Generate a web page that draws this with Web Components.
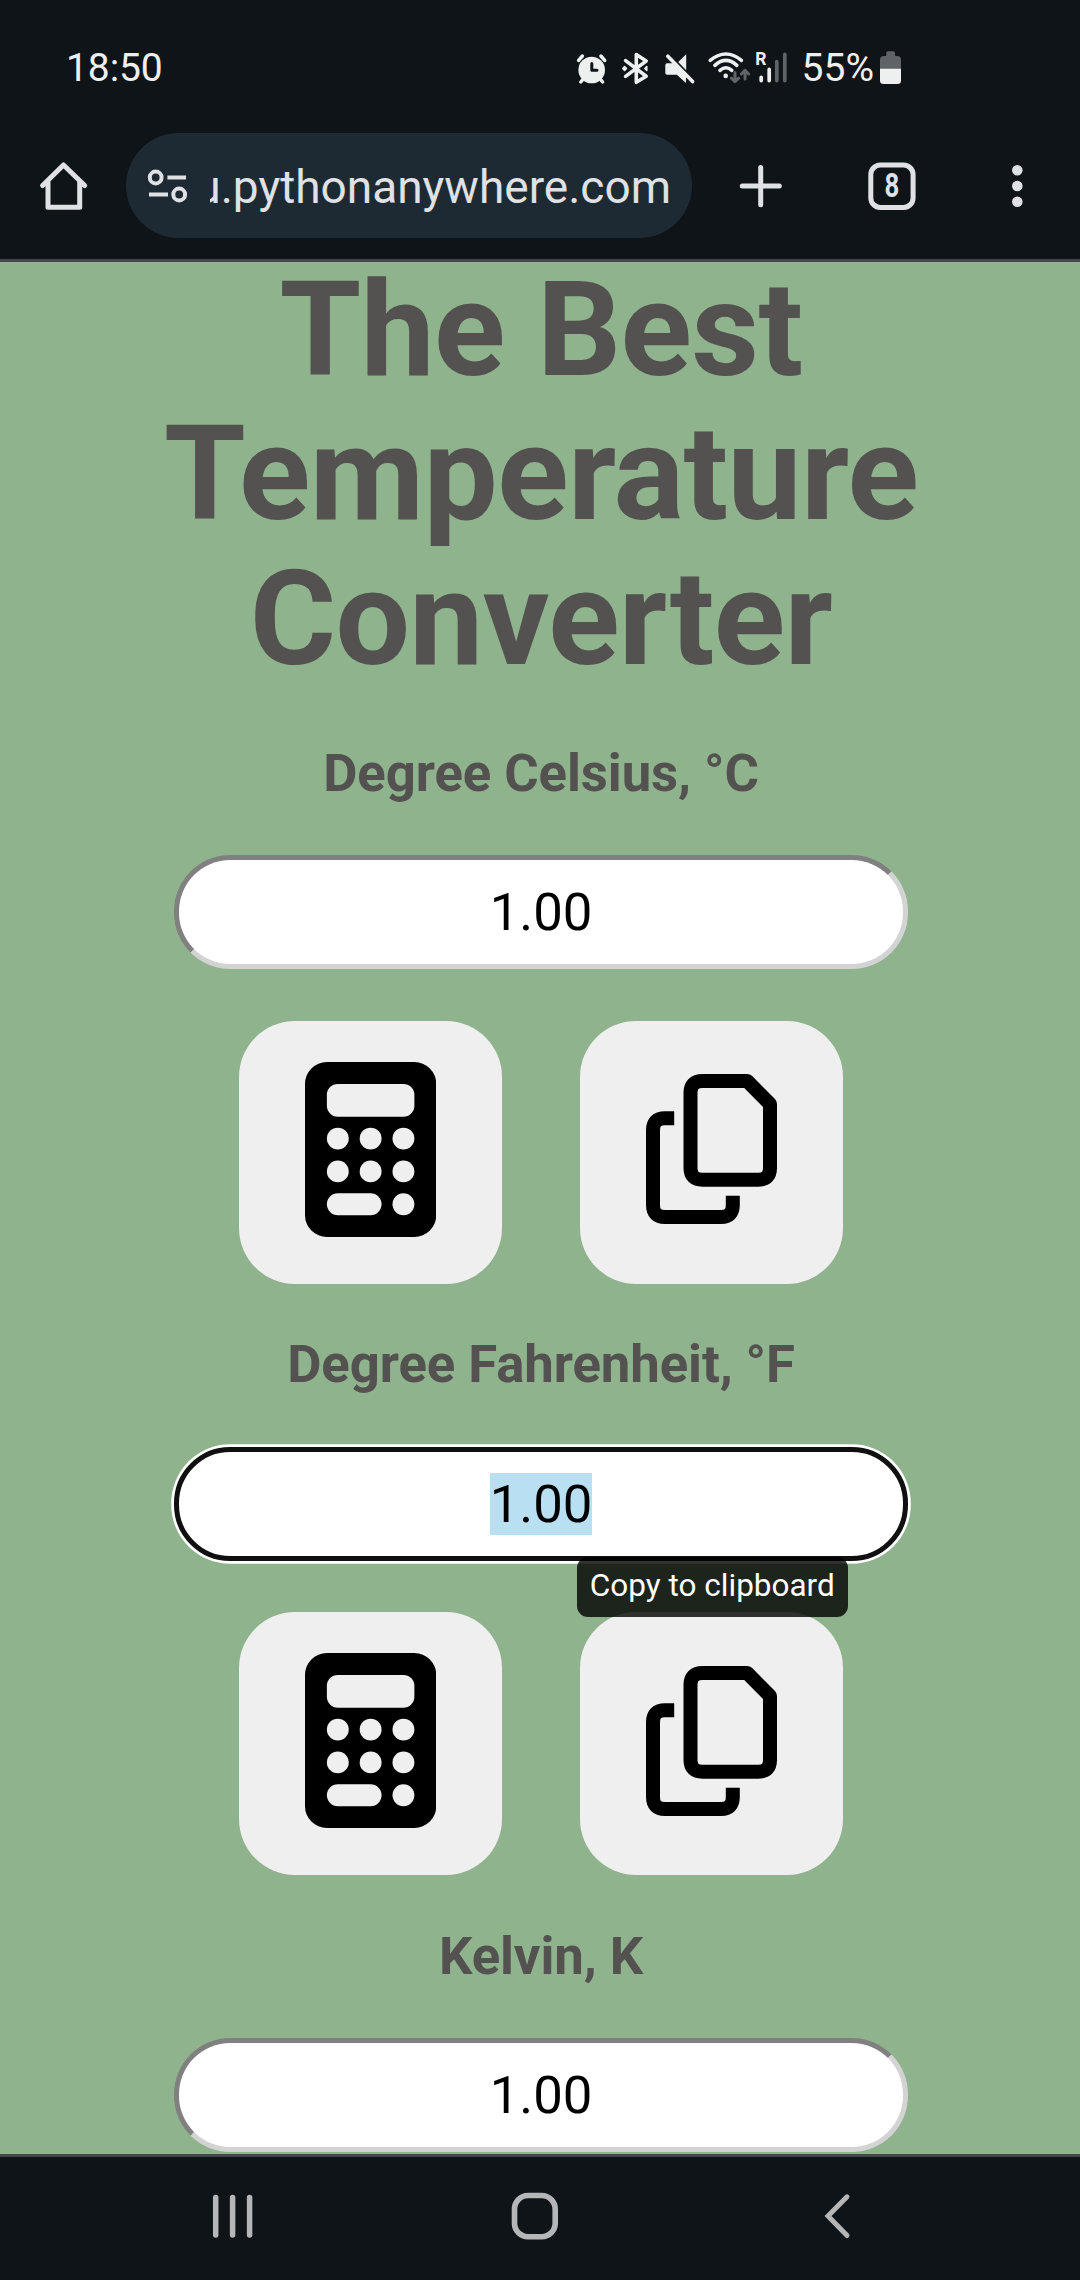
<!DOCTYPE html>
<html lang="en">
<head>
<meta charset="utf-8">
<title>The Best Temperature Converter</title>
<style>
html,body{margin:0;padding:0;background:#0f1418}
body{width:1080px;height:2280px;overflow:hidden;font-family:Roboto,"Liberation Sans",sans-serif}
</style>
</head>
<body>
<phone-screen>
  <status-bar slot="top" time="18:50" battery="55%"></status-bar>
  <browser-bar slot="top" url="u.pythonanywhere.com" tabs="8"></browser-bar>
  <page-title>The Best Temperature Converter</page-title>
  <unit-field label="Degree Celsius, °C" value="1.00"></unit-field>
  <unit-field label="Degree Fahrenheit, °F" value="1.00" focused>
    <tool-tip slot="tip">Copy to clipboard</tool-tip>
  </unit-field>
  <unit-field label="Kelvin, K" value="1.00"></unit-field>
  <nav-bar slot="bottom"></nav-bar>
</phone-screen>
<script>
function define(name, render) {
  customElements.define(name, class extends HTMLElement {
    connectedCallback() {
      if (this.shadowRoot) return;
      const t = document.createElement('template');
      t.innerHTML = render(this);
      this.attachShadow({mode: 'open'}).appendChild(t.content.cloneNode(true));
    }
  });
}

define('phone-screen', () => `
<style>
:host{display:flex;flex-direction:column;width:1080px;height:2280px;background:#0f1418}
header{flex:none}
main{flex:none;height:1892px;overflow:hidden;background:#8fb38c;border-top:3px solid #43484e;border-bottom:3px solid #3f474c}
.scroll{display:flex;flex-direction:column;align-items:center;width:1082px;margin-top:-4.4px}
footer{flex:1}
</style>
<header><slot name="top"></slot></header>
<main><div class="scroll"><slot></slot></div></main>
<footer><slot name="bottom"></slot></footer>`);

define('status-bar', el => `
<style>
:host{display:flex;justify-content:space-between;align-items:center;box-sizing:border-box;height:132px;padding:3px 179px 0 66px;color:#eef0f0}
.time{font-size:39px;line-height:46px;letter-spacing:-.1px}
.right{display:flex;align-items:center}
.pct{font-size:39px;line-height:46px;letter-spacing:0}
svg{display:block}
text{font-family:Roboto,sans-serif}
</style>
<span class="time">${el.getAttribute('time')}</span>
<div class="right">
<svg width="227" height="40" viewBox="575 48 227 40" fill="none" stroke="#eef0f0" stroke-linecap="round" stroke-linejoin="round">
  <circle cx="591.7" cy="70" r="13.3" fill="#eef0f0" stroke="none"/>
  <path d="M578.6 60.4L582.4 56M600.9 56l3.8 4.4M583.2 79l-2.4 3M600.2 79l2.4 3" stroke-width="3.5"/>
  <path d="M591.8 63.6V70.2H597" stroke="#0f1418" stroke-width="3"/>
  <path d="M625.6 60.6L646.2 76.2L636.3 82.3V54.6L646.2 61L625.6 76.4" stroke-width="3.6"/>
  <path d="M624.6 66.6l1.9 1.9-1.9 1.9-1.9-1.9zM646.8 66.6v3.8l-2-1.9z" fill="#eef0f0" stroke-width="1.5"/>
  <path d="M686.2 54.2V70.2L678.2 62.1ZM667 63.2h5.8L686 76v7l-9.2-8.2H667q-1.7 0-1.7-2v-7.6q0-2 1.7-2z" fill="#eef0f0" stroke="none"/>
  <path d="M667.8 56.2L692.6 81.6" stroke-width="3.6"/>
  <path d="M710.2 60.4Q726 47.6 741.4 60.4M714.9 65.4Q726 55.5 736.8 65.4M720 70.4Q726 65.2 731.8 70.4" stroke-width="3.5"/>
  <circle cx="725.7" cy="75.9" r="2.3" fill="#eef0f0" stroke="none"/>
  <path d="M735 72.5V81M731.4 78.2L735 81.6 738.7 78.2M745 79V71M741.3 74L745 70.4 748.6 74" stroke="#5f6467" stroke-width="3"/>
  <path d="M761.2 77.3V80.6M769.2 69.4V80.6" stroke-width="3.7"/>
  <path d="M776.8 61.6V80.6M784.8 54.4V80.6" stroke="#5f6467" stroke-width="3.7"/>
  <text x="755.2" y="65" font-size="17.5" font-weight="700" fill="#eef0f0" stroke="none">R</text>
</svg>
<span class="pct">${el.getAttribute('battery')}</span>
<svg width="27" height="40" viewBox="874 48 27 40">
  <path d="M880 69V60q0-4 4-4h2.200v-2.700q0-2 2-2h4.900q2 0 2 2V56h2q4 0 4 4v9z" fill="#5f6366"/>
  <path d="M880 68.700h21V80.500q0 3.500-3.500 3.500h-14q-3.500 0-3.500-3.500z" fill="#eef0f0"/>
</svg>
</div>`);

define('browser-bar', el => `
<style>
:host{display:flex;align-items:flex-start;box-sizing:border-box;height:127px;padding:1px 0 0 36px;color:#dfe1e4}
svg{display:block;flex:none}
.pill{display:flex;align-items:center;box-sizing:border-box;width:566px;height:105px;margin-left:34px;padding:0 21px 0 20px;border-radius:52.5px;background:#1e2a33}
.url{flex:1;display:flex;justify-content:flex-end;overflow:hidden;margin-left:20px;font-size:46px;line-height:60px;white-space:nowrap;padding-top:2px}
.btn{height:105px;display:flex;align-items:center}
.tabs{position:relative}
.n{position:absolute;inset:0;display:flex;align-items:center;justify-content:center;font-size:33px;font-weight:700;transform:scaleX(.78)}
</style>
<div class="btn"><svg width="56" height="56" viewBox="36 157.500 56 56" fill="none" stroke="#dfe1e4" stroke-width="5" stroke-linecap="round" stroke-linejoin="round"><path d="M42.600 185L63.500 164.500 84.700 185M48 181.500V206.700H79.700V181.500"/></svg></div>
<div class="pill">
<svg width="44" height="40" viewBox="146 165.500 44 40" fill="none" stroke="#dfe1e4" stroke-width="4"><circle cx="155.700" cy="177" r="5.900"/><circle cx="179.200" cy="194" r="5.900"/><path d="M167.400 177H186M149 194h19"/></svg>
<div class="url"><span>${el.getAttribute('url')}</span></div>
</div>
<div class="btn" style="margin-left:44px"><svg width="50" height="50" viewBox="736 160.500 50 50" stroke="#dfe1e4" stroke-width="5" stroke-linecap="round"><path d="M742.300 185.500H779.300M760.700 167V204.300"/></svg></div>
<div class="btn tabs" style="margin-left:80px"><svg width="52" height="52" viewBox="865.500 159.500 52 52" fill="none" stroke="#dfe1e4" stroke-width="5"><rect x="870.300" y="164.600" width="42.300" height="42.300" rx="9.500"/></svg><span class="n">${el.getAttribute('tabs')}</span></div>
<div class="btn" style="margin-left:89px"><svg width="20" height="50" viewBox="1007 160.500 20 50" fill="#dfe1e4"><circle cx="1017.300" cy="169.800" r="5.300"/><circle cx="1017.300" cy="185.500" r="5.300"/><circle cx="1017.300" cy="201.300" r="5.300"/></svg></div>`);

define('page-title', () => `
<style>
:host{display:block;width:900px;padding-bottom:1px}
h1{margin:0;font-size:132px;line-height:144.600px;font-weight:700;letter-spacing:-.6px;text-align:center;color:#545151}
</style>
<h1><slot></slot></h1>`);

define('icon-button', el => `
<style>
:host{display:block}
div{display:flex;align-items:center;justify-content:center;box-sizing:border-box;width:263px;height:263px;padding-bottom:6px;border-radius:56px;background:#efefef}
svg{display:block}
</style>
<div>${el.getAttribute('icon') === 'calculator' ? `
<svg width="131.250" height="175" viewBox="0 0 384 512"><rect width="384" height="512" rx="64"/><g fill="#efefef"><rect x="64" y="64" width="256" height="96" rx="32"/><circle cx="96" cy="224" r="32"/><circle cx="192" cy="224" r="32"/><circle cx="288" cy="224" r="32"/><circle cx="96" cy="320" r="32"/><circle cx="192" cy="320" r="32"/><circle cx="288" cy="320" r="32"/><rect x="64" y="384" width="160" height="64" rx="32"/><circle cx="288" cy="416" r="32"/></g></svg>` : `
<svg width="131" height="150" viewBox="0 0 131 150" fill="none" stroke="#000" stroke-width="14"><path d="M56.500 7H101.200L124 30V94Q124 105.700 112.300 105.700H56.500Q44.500 105.700 44.500 94V19Q44.500 7 56.500 7Z" stroke-linejoin="round"/><path d="M28.200 44.300H19Q7 44.300 7 56.300V131Q7 143 19 143H75Q86.800 143 86.800 131V121.700"/></svg>`}</div>`);

define('unit-field', el => `
<style>
:host{display:flex;flex-direction:column;align-items:center;padding-top:49.300px}
h2{margin:0;font-size:52.700px;line-height:62px;font-weight:700;letter-spacing:-.08px;color:#545151;white-space:nowrap}
.input{display:flex;align-items:center;justify-content:center;box-sizing:border-box;width:733.500px;height:114px;margin-top:51.500px;border:5px solid;border-color:#808080 #d3d3d3 #d3d3d3 #808080;border-radius:56.250px;background:#fff;color:#000;font-size:52.700px;line-height:62px}
:host([focused]) .input{border-color:#101010;box-shadow:0 0 0 2.800px #fff}
:host([focused]) .input span{background:#b9dff3}
.row{display:flex;gap:78px;margin-top:51.700px}
.copy{position:relative}
.tip{position:absolute;left:-3.200px;top:-55px}
</style>
<h2>${el.getAttribute('label')}</h2>
<div class="input"><span>${el.getAttribute('value')}</span></div>
<div class="row"><icon-button icon="calculator"></icon-button><div class="copy"><icon-button icon="copy"></icon-button><div class="tip"><slot name="tip"></slot></div></div></div>`);

define('tool-tip', () => `
<style>
:host{display:flex;align-items:center;justify-content:center;box-sizing:border-box;width:271px;height:60px;padding-bottom:2px;border-radius:11px;background:rgba(0,0,0,.8);color:#fff;font-size:31.500px;line-height:36px;white-space:nowrap}
</style>
<span><slot></slot></span>`);

define('nav-bar', () => `
<style>
:host{display:flex;align-items:center;justify-content:space-between;box-sizing:border-box;height:123px;padding:0 225px 5px 207px}
svg{display:block}
.home{margin-right:7.400px}
</style>
<svg width="52" height="52" viewBox="207 2190.500 52 52" stroke="#b5b6b8" stroke-width="5.500" stroke-linecap="round"><path d="M215.700 2198V2235.500M232.600 2198V2235.500M249.600 2198V2235.500"/></svg>
<svg class="home" width="52" height="52" viewBox="509 2190.500 52 52" fill="none" stroke="#b5b6b8" stroke-width="5.600"><rect x="514.500" y="2196" width="40.700" height="41.200" rx="13.500"/></svg>
<svg width="36" height="52" viewBox="819 2190.500 36 52" fill="none" stroke="#b5b6b8" stroke-width="5" stroke-linecap="round"><path d="M847 2197.300L828 2216.600 847 2236"/></svg>`);
</script>
</body>
</html>
